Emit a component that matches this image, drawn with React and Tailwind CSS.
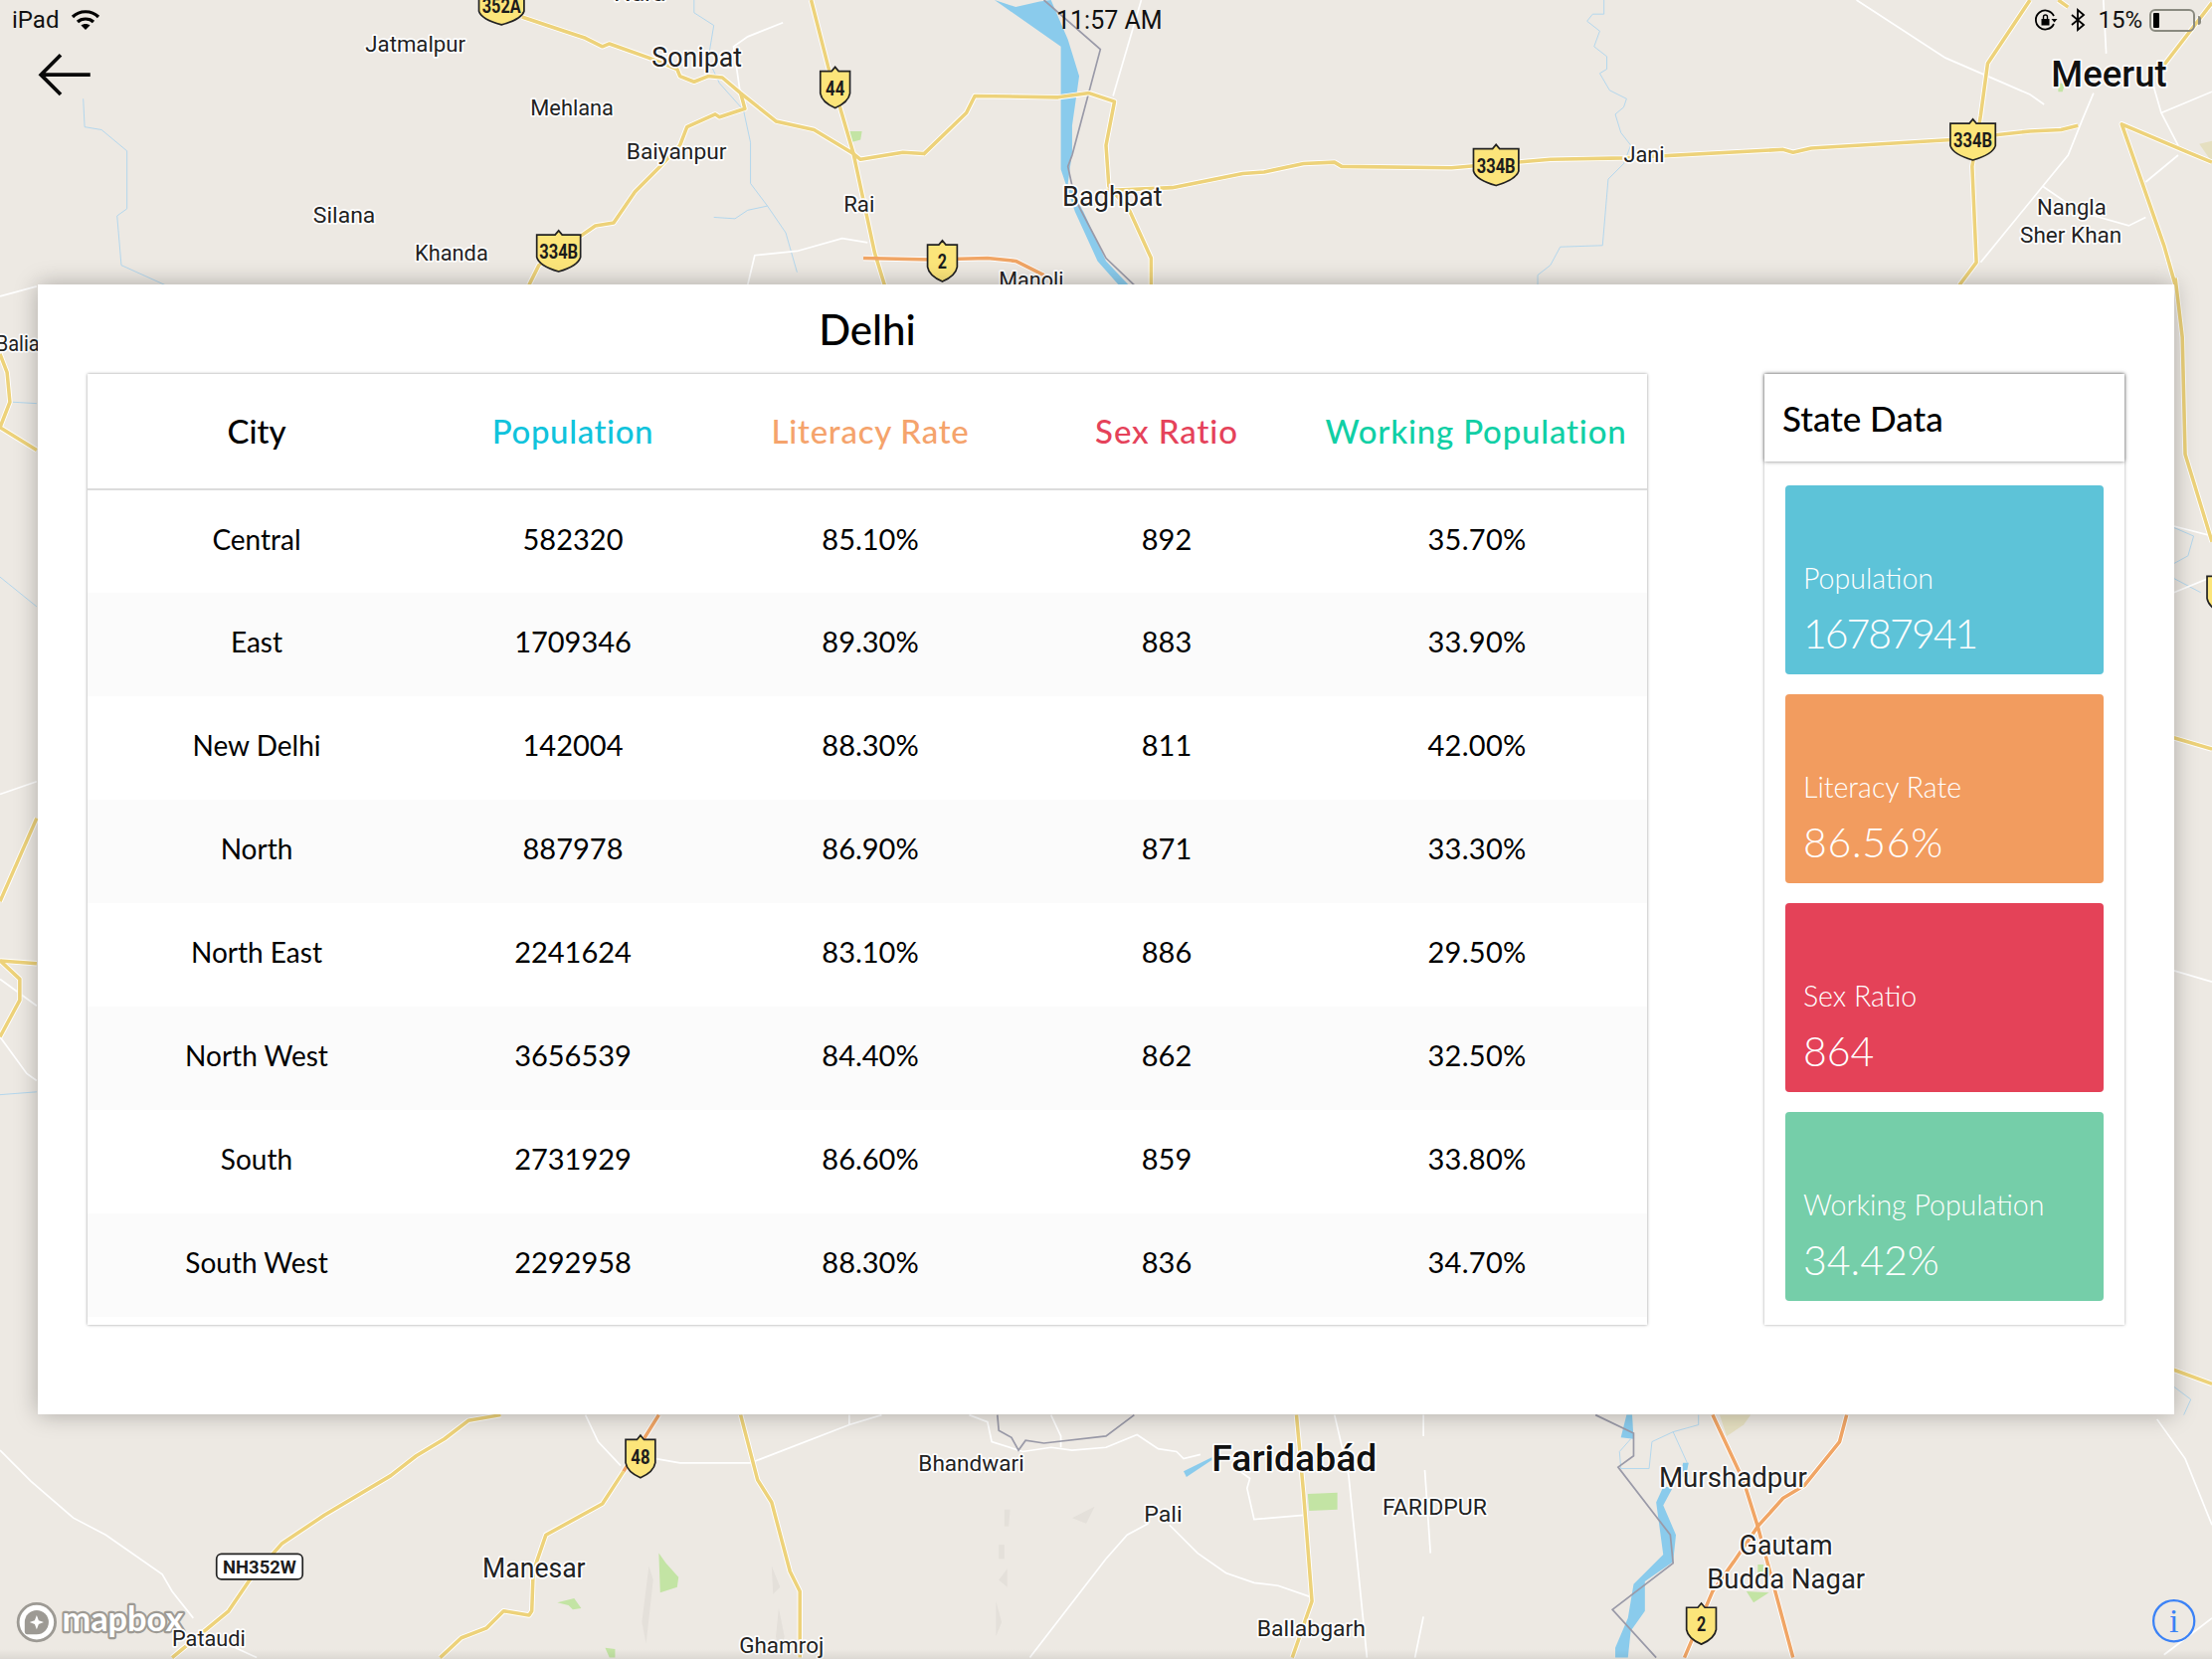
const Y = "#EDD27A", O = "#F0A565", W = "#FFFFFF", B = "#A9D3EE", G = "#9A9AA8";

const cased = [
  ["370,12 400,22 415,27 427,33 432,31 460,41 480,49 482,54 492,58 502,54 512,55 525,66 550,86 577,92 605,109 610,113 640,108 655,109 685,80 691,68 750,69 772,66 790,72 784,103 786,132 801,150 816,183 816,202", Y],
  ["525,66 528,77 510,83 507,81 487,90 482,103 467,119 450,136 435,158 422,160 412,167 382,188 375,202", Y],
  ["575,0 587,47 605,109 620,179 627,202", Y],
  ["612,183 660,184 700,183 720,185 740,195", O],
  ["784,135 831,133 881,123 896,122 924,116 946,115 951,118 1029,119 1099,113 1151,112 1264,106 1271,108 1284,105 1384,99 1439,93 1461,92 1473,89", Y],
  ["1439,0 1409,45 1404,82 1398,118 1401,186 1389,202", Y],
  ["1568,115 1551,108 1504,88 1534,174 1542,202", Y],
  ["1459,0 1466,5", Y],
  ["1534,46 1568,2", Y],
  ["1542,197 1547,239 1549,322 1568,384", Y],
  ["1541,523 1568,531", Y],
  ["1541,971 1568,981", Y],
  ["0,251 5,264 7,285 0,303 26,319", Y],
  ["0,639 26,580", Y],
  ["0,681 26,683", Y],
  ["0,681 14,694 14,709 0,735", Y],
  ["355,1003 332,1007 315,1020 295,1032 277,1046 230,1074 200,1094 177,1120 162,1142 122,1175", Y],
  ["467,1003 442,1043", O],
  ["442,1043 427,1066 387,1088 378,1114 377,1142 375,1145 357,1142 345,1154 327,1161 312,1175", Y],
  ["525,1003 537,1049 547,1065 560,1114 567,1128 567,1175", Y],
  ["919,1003 924,1058 930,1135 916,1175", Y],
  ["1214,1003 1236,1050 1246,1082 1271,1175", O],
  ["1309,1003 1304,1022 1279,1053 1264,1062 1246,1082 1229,1107 1214,1128 1194,1175", O],
];

const minor = [
  "555,16 530,26 520,33 525,68", "615,172 597,169 565,178 535,181 530,202", "809,0 789,68",
  "1316,0 1379,41 1439,67 1449,74", "1484,66 1476,85 1466,110 1448,132 1404,186",
  "1448,132 1474,150 1509,160 1521,154", "1544,110 1521,129", "1491,0 1493,38",
  "1526,59 1532,80 1544,103", "1532,80 1568,65", "0,563 26,554", "0,694 26,713", "0,735 19,761 26,766",
  "0,210 26,203", "0,1028 22,1050 52,1076 75,1088 115,1116 122,1128 137,1147", "167,1168 182,1175",
  "415,1003 424,1022 440,1039", "465,1034 482,1037 532,1037 602,1010 625,1003", "602,1003 602,1010",
  "687,1003 700,1008 703,1022 725,1029 745,1026 760,1028 784,1026 806,1017 821,1027 834,1029 839,1034 851,1031",
  "745,1003 752,1018 752,1026", "784,1105 730,1175", "879,1043 886,1048 884,1055 889,1077 924,1074",
  "946,1003 956,1046 969,1175", "1009,1003 1009,1018", "1010,1042 1014,1101", "784,1105 799,1088 814,1080",
  "829,1081 849,1101 869,1115 889,1122 906,1124 929,1132", "1009,1146 1003,1175",
  "1529,1006 1549,1034 1568,1081", "1568,1147 1534,1173", "1541,373 1568,380", "1541,420 1568,409", "1541,688 1568,696",
];

const thin = [
  "59,70 60,90 72,92 90,107 90,148 83,153 86,188 117,202",
  "492,0 492,9 506,18 502,42 510,59 527,78 532,101 532,130 544,146 557,165 565,193",
  "506,154 521,155 530,149 544,146",
  "1137,0 1137,10 1129,10 1125,15 1134,22 1130,33 1139,40 1139,49 1134,52 1141,64 1153,70 1151,76 1145,81 1149,94 1156,103 1151,116 1140,127 1136,174 1106,175 1099,188 1090,195 1090,202",
  "9,285 26,286", "0,409 26,430", "0,776 26,774",
  "1204,1003 1204,1010 1186,1015 1171,1022 1169,1041 1149,1041 1148,1029 1156,1020", "1186,1015 1196,1037",
  "1541,374 1555,380 1551,394 1540,400 1541,410 1560,420",
  "1541,983 1553,992 1548,1003",
];

const labels = [
  ["Nara", 435, 1, 37, 15.5], ["Jatmalpur", 259, 37, 71, 15.5], ["Sonipat", 462, 47, 64, 19.5], ["Mehlana", 376, 82, 59, 15.5],
  ["Baiyanpur", 444, 113, 71, 15.5], ["Silana", 222, 158, 44, 15.5], ["Khanda", 294, 185, 52, 15.5], ["Rai", 598, 150, 22, 15.5],
  ["Baghpat", 753, 146, 71, 19.5], ["Manoli", 708, 204, 46, 15.5], ["Jani", 1151, 115, 29, 15.5], ["Nangla", 1444, 152, 49, 15.5],
  ["Sher Khan", 1432, 172, 72, 15.5], ["Balia", -3, 249, 31, 15.5], ["Bhandwari", 651, 1043, 75, 15.5],
  ["FARIDPUR", 980, 1074, 74, 15.5], ["Pali", 811, 1079, 27, 15.5], ["Manesar", 342, 1118, 73, 19.5],
  ["Ghamroj", 524, 1172, 60, 15.5], ["Ballabgarh", 891, 1160, 77, 15.5], ["Murshadpur", 1176, 1054, 105, 19.5], ["Gautam", 1233, 1102, 66, 19.5],
  ["Budda Nagar", 1210, 1126, 112, 19.5],
];

const shields = [
  [339, -10, 33, 28, "352A"], [380, 163, 32, 30, "334B"], [581, 47, 22, 30, "44"], [657, 170, 22, 30, "2"],
  [1044, 102, 33, 30, "334B"], [1382, 84, 33, 30, "334B"], [443, 1017, 22, 31, "48"], [1195, 1136, 22, 30, "2"], [1564, 405, 22, 30, ""],
];

function Shield({ x, y, w, h, t }) {
  return (
    <g transform={`translate(${x} ${y})`}>
      <path d={`M0.5 3.5H${w / 2 - 2.5}L${w / 2} 0.5L${w / 2 + 2.5} 3.5H${w - 0.5}V${h * 0.64}Q${w * 0.93} ${h * 0.85} ${w / 2} ${h - 0.5}Q${w * 0.07} ${h * 0.85} 0.5 ${h * 0.64}Z`} fill="#FCE57A" stroke="#222" strokeWidth="1.2" />
      {t && (
        <text x={w / 2} y={h / 2 + 5.5} textAnchor="middle" textLength={t.length * 7 - 0.5} lengthAdjust="spacingAndGlyphs" fontFamily="Roboto, sans-serif" fontWeight="700" fontSize="14" fill="#1c1c1c">{t}</text>
      )}
    </g>
  );
}

function MapLayer() {
  return (
    <svg className="absolute inset-0 w-[2224px] h-[1668px]" viewBox="0 0 1568 1176">
      <rect width="1568" height="1176" fill="#EDE9E3" />
      {["1219,1003 1241,1003 1236,1010 1224,1018", "1559,102 1568,100 1568,115"].map((p) => <polygon key={p} points={p} fill="#E5DFC0" />)}
      {["712,1070 716,1070 715,1082 712,1082", "708,1095 712,1095 712,1105 708,1105", "760,1076 776,1068 770,1080", "708,1120 714,1112 714,1125",
        "460,1110 463,1120 458,1165 455,1150", "547,1110 553,1125 548,1130", "552,1140 556,1160 553,1175 550,1160", "706,1135 710,1150 706,1160"].map((p) => <polygon key={p} points={p} fill="#E4E0DA" />)}
      {["927,1059 948,1058 948,1070 928,1071", "1238,1128 1254,1129 1243,1136", "1246,1109 1250,1109 1251,1116 1246,1116", "467,1101 472,1108 481,1118 480,1125 468,1129",
        "395,1136 407,1133 412,1140 406,1141 403,1138", "429,1168 436,1169 436,1175 432,1175", "602,93 611,93 610,99 603,101", "1459,59 1464,59 1462,65 1459,65"].map((p) => <polygon key={p} points={p} fill="#C3E4A4" />)}
      {thin.map((p) => <polyline key={p} points={p} fill="none" stroke={B} strokeWidth="0.6" />)}
      {minor.map((p) => <polyline key={p} points={p} fill="none" stroke={W} strokeWidth="1.2" />)}
      <polygon points="705,0 720,5 737,1 745,0 757,28 765,54 760,89 760,108 757,130 768,150 784,185 800,202 793,202 778,185 762,150 752,120 752,33" fill="#8ACBEC" />
      <polygon points="1153,1003 1157,1003 1158,1020 1149,1019" fill="#8ACBEC" />
      <polygon points="1179,1054 1186,1054 1179,1067 1188,1088 1186,1107 1166,1121 1166,1142 1156,1156 1154,1175 1145,1175 1145,1168 1154,1147 1158,1123 1179,1102 1174,1065" fill="#8ACBEC" />
      <polygon points="1193,1037 1197,1037 1195,1047 1191,1047" fill="#8ACBEC" />
      <polygon points="839,1043 859,1033 859,1035 841,1047" fill="#8ACBEC" />
      {["740,0 780,35 760,110 757,118 762,141 784,183 804,202", "707,1003 708,1014 717,1019 722,1028 727,1021 740,1023 784,1018 804,1003",
        "1131,1003 1158,1016 1158,1032 1147,1040 1184,1088 1186,1108 1143,1141 1174,1175"].map((p) => <polyline key={p} points={p} fill="none" stroke={G} strokeWidth="1.2" />)}
      {cased.map(([p]) => <polyline key={p} points={p} fill="none" stroke={W} strokeWidth="3.8" strokeLinejoin="round" />)}
      {cased.map(([p, c]) => <polyline key={p} points={p} fill="none" stroke={c} strokeWidth="2.5" strokeLinejoin="round" />)}
      {shields.map(([x, y, w, h, t], i) => <Shield key={i} x={x} y={y} w={w} h={h} t={t} />)}
      <rect x="153.5" y="1101.5" width="61" height="18" rx="3.5" fill="#fff" stroke="#222" strokeWidth="1.2" />
      <text x="184" y="1115.5" textAnchor="middle" textLength="52" lengthAdjust="spacingAndGlyphs" fontFamily="Roboto, sans-serif" fontWeight="700" fontSize="13.5" fill="#1c1c1c">NH352W</text>
      <g fontFamily="Roboto, sans-serif" fill="#222" stroke="#fff" strokeWidth="2.4" strokeLinejoin="round" paintOrder="stroke">
        {labels.map(([t, x, y, w, s]) => <text key={t} x={x} y={y} textLength={w} lengthAdjust="spacingAndGlyphs" fontSize={s}>{t}</text>)}
        <text x="1454" y="61" textLength="82" lengthAdjust="spacingAndGlyphs" fontSize="26" fontWeight="500" fill="#111">Meerut</text>
        <text x="859" y="1043" textLength="117" lengthAdjust="spacingAndGlyphs" fontSize="26" fontWeight="500" fill="#111">Faridabád</text>
      </g>
      <circle cx="26" cy="1150" r="13.2" fill="#fff" stroke="#9D9A94" strokeWidth="2" />
      <path d="M26 1141.5A8.5 8.5 0 1 1 26 1158.5H19Q17.5 1158.5 17.5 1157V1150A8.5 8.5 0 0 1 26 1141.5Z" fill="#9D9A94" />
      <path d="M26 1145L27.4 1148.6L31 1150L27.4 1151.4L26 1155L24.6 1151.4L21 1150L24.6 1148.6Z" fill="#fff" />
      <text x="44" y="1156.5" textLength="86" lengthAdjust="spacingAndGlyphs" fontFamily="Lato, sans-serif" fontWeight="700" fontSize="24" fill="#fff" stroke="#9D9A94" strokeWidth="3" strokeLinejoin="round" paintOrder="stroke">mapbox</text>
      <text x="122" y="1167" textLength="52" lengthAdjust="spacingAndGlyphs" fontFamily="Roboto, sans-serif" fontSize="15.5" fill="#222" stroke="#fff" strokeWidth="2.4" strokeLinejoin="round" paintOrder="stroke">Pataudi</text>
      <path d="M64 53H30M43 39L29 53L43 67" fill="none" stroke="#0a0a0a" strokeWidth="2.6" />
      <circle cx="1541" cy="1149" r="14.5" fill="none" stroke="#3B82F6" strokeWidth="1.6" />
      <text x="1541" y="1157" textAnchor="middle" fontFamily="'Liberation Serif', serif" fontSize="24" fill="#3B82F6">i</text>
    </svg>
  );
}

function StatusBar() {
  return (
    <div className="absolute top-0 inset-x-0 h-[40px] flex items-center justify-between pl-[12px] pr-[11px] text-[24px] text-[#111] font-['Roboto',sans-serif]">
      <div className="flex items-center gap-[12px]">
        <span>iPad</span>
        <svg width="30" height="22" viewBox="0 0 30 22" fill="none" stroke="#000" strokeWidth="3.2">
          <path d="M2 8C9 1 21 1 28 8" />
          <path d="M7 13C11 9 19 9 23 13" />
          <path d="M15 21L10.5 16.5C13 14.5 17 14.5 19.5 16.5Z" fill="#000" stroke="none" />
        </svg>
      </div>
      <span className="absolute left-[1062px] top-[2px] text-[25px]">11:57 AM</span>
      <div className="flex items-center">
        <svg width="24" height="24" viewBox="0 0 24 24" fill="none" stroke="#000" strokeWidth="1.8" className="mr-[12px]">
          <path d="M20 16A9.5 9.5 0 1 1 20 8" />
          <path d="M17.5 11L20.5 14.5L23.5 11Z" fill="#000" stroke="none" />
          <rect x="7.5" y="11" width="8" height="6.5" fill="#000" stroke="none" />
          <path d="M9.5 11V9A2 2 0 0 1 13.5 9V11" strokeWidth="1.4" />
        </svg>
        <svg width="16" height="24" viewBox="0 0 14 24" fill="none" stroke="#000" strokeWidth="1.8" className="mr-[12px]">
          <path d="M1 7L13 17L7 22V2L13 7L1 17" />
        </svg>
        <span className="mr-[7px]">15%</span>
        <div className="w-[46px] h-[23px] rounded-[6px] border-2 border-[#8a8a80] p-[2px] flex">
          <div className="w-[6px] bg-black rounded-[1px]" />
        </div>
        <div className="w-[3px] h-[9px] ml-[3px] rounded-r bg-[#8a8a80]" />
      </div>
    </div>
  );
}

const rows = [
  ["Central", "582320", "85.10%", "892", "35.70%"],
  ["East", "1709346", "89.30%", "883", "33.90%"],
  ["New Delhi", "142004", "88.30%", "811", "42.00%"],
  ["North", "887978", "86.90%", "871", "33.30%"],
  ["North East", "2241624", "83.10%", "886", "29.50%"],
  ["North West", "3656539", "84.40%", "862", "32.50%"],
  ["South", "2731929", "86.60%", "859", "33.80%"],
  ["South West", "2292958", "88.30%", "836", "34.70%"],
];

const cards = [
  ["Population", "16787941", "bg-[#5DC3D8]", "tracking-[-2px]"],
  ["Literacy Rate", "86.56%", "bg-[#F29C5F]", "tracking-[0.7px]"],
  ["Sex Ratio", "864", "bg-[#E44258]", ""],
  ["Working Population", "34.42%", "bg-[#75CEA9]", ""],
];

function DataTable() {
  return (
    <div className="h-[956px] bg-white shadow-[0_0_3px_rgba(0,0,0,0.4)]">
      <table className="w-full table-fixed border-collapse text-center text-black">
        <thead>
          <tr className="h-[116px] text-[33px]">
            <th className="w-[340px] font-medium text-black">City</th>
            <th className="w-[296px] font-medium tracking-[0.6px] text-[#10C3DC]">Population</th>
            <th className="w-[302px] font-medium tracking-[0.75px] text-[#F5A36C]">Literacy Rate</th>
            <th className="w-[294px] font-medium tracking-[0.9px] text-[#E5425A]">Sex Ratio</th>
            <th className="pr-[8px] font-medium tracking-[0.8px] text-[#10CFA5]">Working Population</th>
          </tr>
        </thead>
        <tbody className="text-[29px]">
          {rows.map((r, i) => (
            <tr key={r[0]} className={`h-[104px] ${i === 0 ? "border-t-2 border-[#dcdcdc]" : ""} ${i % 2 ? "bg-[#FBFBFB]" : "bg-white"}`}>
              <td className="pb-[6px] text-[28px]">{r[0]}</td>
              <td className="pb-[6px]">{r[1]}</td>
              <td className="pb-[6px]">{r[2]}</td>
              <td className="pb-[6px]">{r[3]}</td>
              <td className="pb-[6px] pr-[6px] tracking-[0.3px]">{r[4]}</td>
            </tr>
          ))}
        </tbody>
      </table>
    </div>
  );
}

function StateData() {
  return (
    <div className="w-[362px] h-[956px] bg-white shadow-[0_0_3px_rgba(0,0,0,0.35)]">
      <div className="h-[88px] flex items-center pl-[18px] text-[35px] font-medium text-black shadow-[0_0_4px_rgba(0,0,0,0.5)]">State Data</div>
      <div className="flex flex-col gap-[20px] px-[21px] pt-[24px]">
        {cards.map(([l, v, c, t]) => (
          <div key={l} className={`h-[190px] rounded-[4px] flex flex-col justify-end pl-[18px] pb-[13px] text-white font-light ${c}`}>
            <div className="text-[28.5px] leading-[44px]">{l}</div>
            <div className={`text-[41px] leading-[56px] mt-[6px] ${t}`}>{v}</div>
          </div>
        ))}
      </div>
    </div>
  );
}

export default function App() {
  return (
    <div className="relative w-[2224px] h-[1668px] overflow-hidden bg-[#EDE9E3] font-['Lato',sans-serif]">
      <MapLayer />
      <StatusBar />
      <div className="absolute bottom-0 inset-x-0 h-[10px] bg-gradient-to-t from-[rgba(0,0,0,0.07)] to-transparent" />
      <div className="relative pt-[286px] pl-[38px]">
        <div className="w-[2148px] h-[1136px] bg-white shadow-[0_0_22px_rgba(0,0,0,0.28)] flex pl-[50px] pr-[50px]">
          <div className="w-[1568px]">
            <div className="h-[90px] flex items-center justify-center text-[42px] font-medium text-black">Delhi</div>
            <DataTable />
          </div>
          <div className="ml-[118px] pt-[90px]">
            <StateData />
          </div>
        </div>
      </div>
    </div>
  );
}
